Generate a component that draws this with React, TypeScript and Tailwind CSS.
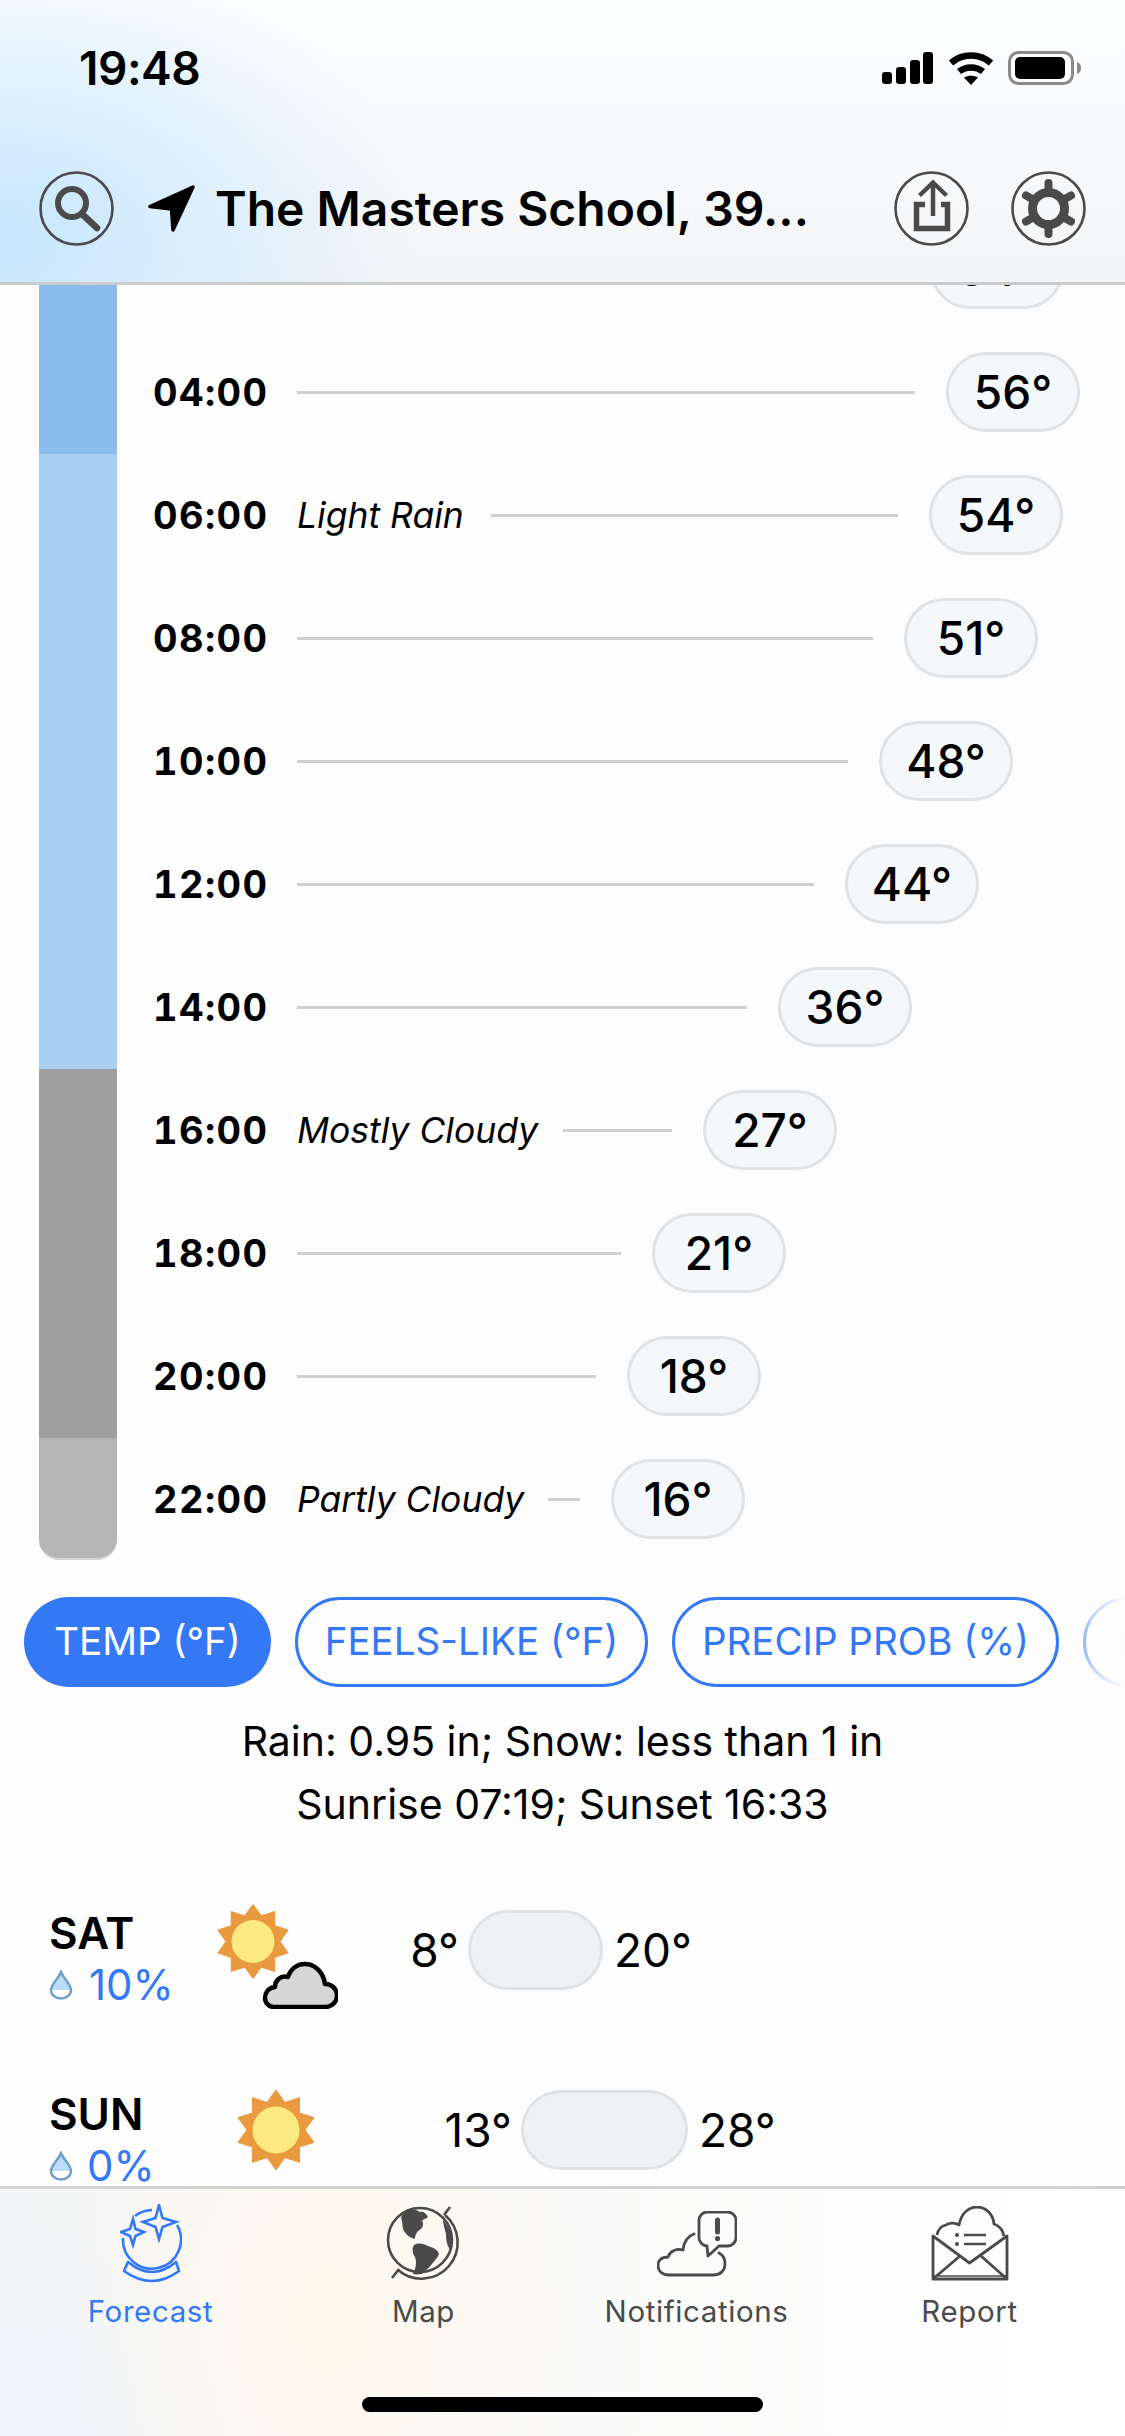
import React from "react";

const sunPoints = (c: number, R: number, r: number) => {
  const pts: string[] = [];
  for (let i = 0; i < 20; i++) {
    const a = (-90 + i * 18) * (Math.PI / 180);
    const rad = i % 2 === 0 ? R : r;
    pts.push(`${(c + rad * Math.cos(a)).toFixed(2)},${(c + rad * Math.sin(a)).toFixed(2)}`);
  }
  return pts.join(" ");
};

const rows = [
  { t: "02:00", label: "", labelW: "", line: "w-[602px]", temp: "54°" },
  { t: "04:00", label: "", labelW: "", line: "w-[618px]", temp: "56°" },
  { t: "06:00", label: "Light Rain", labelW: "w-[194px]", line: "w-[407px]", temp: "54°" },
  { t: "08:00", label: "", labelW: "", line: "w-[576px]", temp: "51°" },
  { t: "10:00", label: "", labelW: "", line: "w-[551px]", temp: "48°" },
  { t: "12:00", label: "", labelW: "", line: "w-[517px]", temp: "44°" },
  { t: "14:00", label: "", labelW: "", line: "w-[450px]", temp: "36°" },
  { t: "16:00", label: "Mostly Cloudy", labelW: "w-[266px]", line: "w-[109px]", temp: "27°" },
  { t: "18:00", label: "", labelW: "", line: "w-[324px]", temp: "21°" },
  { t: "20:00", label: "", labelW: "", line: "w-[299px]", temp: "18°" },
  { t: "22:00", label: "Partly Cloudy", labelW: "w-[251px]", line: "w-[32px]", temp: "16°" },
];

function Drop() {
  return (
    <svg width="24" height="30" viewBox="0 0 24 30" className="shrink-0">
      <path d="M12 2 C10 8 2 14 2 20 A10 8.5 0 0 0 22 20 C22 14 14 8 12 2 Z" fill="#fff" />
      <path d="M12 2 C10 8 2 14 2 20 L22 20 C22 14 14 8 12 2 Z" fill="#bcdcfa" />
      <path d="M12 2 C10 8 2 14 2 20 A10 8.5 0 0 0 22 20 C22 14 14 8 12 2 Z" fill="none" stroke="#6f9fc8" strokeWidth="2.4" />
    </svg>
  );
}

function Sun({ size }: { size: number }) {
  return (
    <svg width={size} height={size} viewBox="0 0 80 80" className="shrink-0">
      <polygon points={sunPoints(40, 40, 29)} fill="#ea9a3e" stroke="#ea9a3e" strokeWidth="1" strokeLinejoin="round" />
      <circle cx="40" cy="40" r="23.5" fill="#fce97f" />
    </svg>
  );
}

function SunCloud() {
  return (
    <svg width="121" height="105" viewBox="0 0 121 105" className="shrink-0">
      <polygon points={sunPoints(36, 37, 27)} fill="#ea9a3e" stroke="#ea9a3e" strokeWidth="1" strokeLinejoin="round" transform="translate(0 1.5)" />
      <circle cx="36" cy="37.5" r="21.5" fill="#fce97f" />
      <g transform="translate(46 58)">
        <path d="M11 45 H63 A11.5 11.5 0 0 0 62 22 C60 8 50 2 42 2 C33 2 27 8 25 15 C17 13 12 19 12 25 C5 26 2 31 2 36 C2 41 6 45 11 45 Z" fill="#d6d6d6" stroke="#000" strokeWidth="4.5" strokeLinejoin="round" />
      </g>
    </svg>
  );
}

function RoundBtn({ children }: { children: React.ReactNode }) {
  return (
    <svg width="75" height="75" viewBox="0 0 75 75" className="shrink-0" fill="none" stroke="#4a4a4a">
      <circle cx="37.5" cy="37.5" r="36" strokeWidth="2.6" />
      {children}
    </svg>
  );
}

function Pill({ children, cls }: { children: React.ReactNode; cls: string }) {
  return (
    <div className={`h-[80px] w-[134px] shrink-0 rounded-[40px] border-[3px] border-[#dfe3e6] bg-[#f5f8fb] flex items-center justify-center pt-[2px] text-[46px] font-medium text-black ${cls}`}>
      {children}
    </div>
  );
}

function Tab({ label, active, children }: { label: string; active?: boolean; children: React.ReactNode }) {
  return (
    <div className={`flex flex-col items-center h-[150px] ${active ? "text-[#3478f6]" : "text-[#4a4a4a]"}`}>
      <div className="h-[97px] flex items-center justify-center">{children}</div>
      <span className="-mt-[3px] text-[29.5px] leading-[44px] tracking-[0.6px]">{label}</span>
    </div>
  );
}

export default function App() {
  return (
    <div className="w-[1125px] h-[2436px] flex flex-col overflow-hidden bg-[#fdfdfd] font-[family-name:Inter,sans-serif] text-black">
      {/* Header */}
      <header className="h-[285px] shrink-0 border-b-[3px] border-[#c9cbcd] bg-[radial-gradient(ellipse_420px_300px_at_0px_240px,#c5e6ff_0%,rgba(197,230,255,0.55)_45%,rgba(197,230,255,0)_100%),linear-gradient(180deg,#fdfeff_0%,#f4f5f6_100%)]">
        <div className="h-[136px] flex items-center justify-between pl-[79px] pr-[43px]">
          <span className="text-[46px] font-semibold tracking-[-0.5px]">19:48</span>
          <div className="flex items-center gap-[15px]">
            <svg width="51" height="32" viewBox="0 0 51 32" fill="#000">
              <rect x="0" y="20" width="10" height="12" rx="3" />
              <rect x="14" y="15" width="10" height="17" rx="3" />
              <rect x="28" y="8" width="10" height="24" rx="3" />
              <rect x="41" y="0" width="10" height="32" rx="3" />
            </svg>
            <svg width="46" height="33" viewBox="0 0 46 33" fill="none" stroke="#000" strokeWidth="6.5">
              <path d="M3 11 C14 1 32 1 43 11" />
              <path d="M11 19.5 C18 14 28 14 35 19.5" />
              <path d="M23 33 L16 25.5 C20 23 26 23 30 25.5 Z" fill="#000" stroke="none" />
            </svg>
            <svg width="74" height="34" viewBox="0 0 74 34" className="-ml-[1px]">
              <rect x="1.5" y="1.5" width="63" height="31" rx="9" fill="none" stroke="#8a8a8a" strokeWidth="3" />
              <rect x="7" y="6" width="50" height="22" rx="5" fill="#000" />
              <path d="M69 11 C72 12 73 14 73 17 C73 20 72 22 69 23 Z" fill="#8a8a8a" />
            </svg>
          </div>
        </div>
        <div className="mt-[35px] h-[75px] flex items-center pl-[39px] pr-[39px]">
          <RoundBtn>
            <circle cx="33" cy="32" r="14" strokeWidth="6" />
            <path d="M43 43 L58 57" strokeWidth="6.5" strokeLinecap="round" />
          </RoundBtn>
          <svg width="47" height="47" viewBox="0 0 47 47" className="ml-[34px] shrink-0">
            <path d="M45 2 L2 21.5 L23.5 24 L25 45 Z" fill="#000" stroke="#000" strokeWidth="3.5" strokeLinejoin="round" />
          </svg>
          <span className="ml-[20px] text-[48px] font-semibold whitespace-nowrap">The Masters School, 39...</span>
          <div className="ml-auto flex items-center gap-[42px]">
            <RoundBtn>
              <path d="M39 12 V45" strokeWidth="4.5" />
              <path d="M25.5 24.5 L39 11.5 L52.5 24.5" strokeWidth="4.5" />
              <path d="M31 33.5 H22.5 V57.5 H53.5 V33.5 H47" strokeWidth="5.5" />
            </RoundBtn>
            <RoundBtn>
              <circle cx="37.5" cy="37.5" r="16" strokeWidth="9" />
              <path d="M37.5 12 V20 M37.5 55 V63 M15 24.5 L22 28.5 M53 46.5 L60 50.5 M60 24.5 L53 28.5 M22 46.5 L15 50.5" strokeWidth="8" strokeLinecap="round" />
            </RoundBtn>
          </div>
        </div>
      </header>

      {/* Scrolling content */}
      <main className="flex-1 min-h-0 overflow-hidden">
        <div className="flex h-[1275px]">
          <div className="ml-[39px] w-[78px] h-[1275px] shrink-0 flex flex-col overflow-hidden rounded-b-[20px] border-b-[2px] border-[#d5d5d5]">
            <div className="h-[169px] bg-[#8abcec]" />
            <div className="h-[615px] bg-[#a7d0f3]" />
            <div className="h-[369px] bg-[#9f9f9f]" />
            <div className="flex-1 bg-[#b5b5b5]" />
          </div>
          <div className="-mt-[78px] pl-[36px] flex flex-col">
            {rows.map((r) => (
              <div key={r.t} className="h-[123px] flex items-center">
                <span className="w-[144px] shrink-0 mt-[2px] text-[38px] font-bold tracking-[1.4px] tabular-nums">{r.t}</span>
                {r.label && (
                  <span className={`${r.labelW} shrink-0 mt-[2px] text-[35.5px] italic whitespace-nowrap`}>{r.label}</span>
                )}
                <div className={`h-[3px] mt-[2px] bg-[#cfcfcf] ${r.line}`} />
                <Pill cls="ml-[31px]">{r.temp}</Pill>
              </div>
            ))}
          </div>
        </div>

        {/* Chips */}
        <div className="relative mt-[37px] flex gap-[24px] pl-[24px] overflow-hidden h-[90px]">
          <div className="h-[90px] w-[247px] shrink-0 rounded-[45px] bg-[#3478f6] text-white text-[38.5px] flex items-center justify-center">TEMP (°F)</div>
          <div className="h-[90px] w-[353px] shrink-0 rounded-[45px] border-[3px] border-[#3478f6] text-[#3478f6] text-[38.5px] flex items-center justify-center">FEELS-LIKE (°F)</div>
          <div className="h-[90px] w-[387px] shrink-0 rounded-[45px] border-[3px] border-[#3478f6] text-[#3478f6] text-[38.5px] flex items-center justify-center">PRECIP PROB (%)</div>
          <div className="h-[90px] w-[353px] shrink-0 rounded-[45px] border-[3px] border-[#3478f6] text-[#3478f6] text-[38.5px] flex items-center pl-[33px]">RAIN (in)</div>
          <div className="absolute right-0 top-0 h-[90px] w-[65px] bg-gradient-to-r from-[#fdfdfd00] via-[#fdfdfdb0] to-[#fdfdfd]" />
        </div>

        {/* Summary */}
        <div className="mt-[23px] text-center text-[41px] leading-[63px]">
          <p>Rain: 0.95 in; Snow: less than 1 in</p>
          <p>Sunrise 07:19; Sunset 16:33</p>
        </div>

        {/* Days */}
        <div className="mt-[68px] flex h-[181px] items-start pl-[49px]">
          <div className="w-[168px] shrink-0">
            <div className="pt-[3px] text-[44px] leading-[53px] font-semibold">SAT</div>
            <div className="flex items-center gap-[16px] text-[42px] leading-[50px] text-[#3478f6]"><Drop />10%</div>
          </div>
          <SunCloud />
          <div className="mt-[6px] flex items-center text-[46px]">
            <span className="w-[121px] text-right">8°</span>
            <div className="ml-[9px] h-[80px] w-[135px] rounded-[40px] border-[3px] border-[#dfe3e6] bg-[#eff2f4]" />
            <span className="ml-[11px]">20°</span>
          </div>
        </div>
        <div className="flex h-[181px] items-start pl-[49px]">
          <div className="w-[187px] shrink-0">
            <div className="pt-[3px] text-[44px] leading-[53px] font-semibold">SUN</div>
            <div className="flex items-center gap-[14px] text-[42px] leading-[50px] text-[#3478f6]"><Drop />0%</div>
          </div>
          <div className="mt-[5px]"><Sun size={80} /></div>
          <div className="mt-[5px] flex items-center text-[46px]">
            <span className="w-[196px] text-right">13°</span>
            <div className="ml-[9px] h-[80px] w-[167px] rounded-[40px] border-[3px] border-[#dfe3e6] bg-[#eff2f4]" />
            <span className="ml-[11px]">28°</span>
          </div>
        </div>
      </main>

      {/* Tab bar */}
      <footer className="h-[250px] shrink-0 border-t-[3px] border-[#d2d2d2] relative bg-[radial-gradient(ellipse_260px_360px_at_330px_130px,#fff8ec_0%,rgba(255,248,236,0)_100%),radial-gradient(ellipse_260px_240px_at_0px_250px,#eff4fa_0%,rgba(239,244,250,0)_100%),linear-gradient(90deg,#f4f5f6_0%,#fbfbfa_60%,#ffffff_100%)]">
        <div className="pl-[14px] pt-[6px] grid grid-cols-[repeat(4,273px)]">
          <Tab label="Forecast" active>
            <svg width="62" height="80" viewBox="0 0 62 80" fill="none" stroke="#3478f6" strokeWidth="2.6" strokeLinejoin="miter">
              <path d="M57 21 A29 29 0 1 1 3 34" />
              <path d="M15 12 A29 29 0 0 1 32 6" />
              <path d="M39 1 L42.5 14 L56 18 L42.5 23 L39 35 L35.5 23 L23 18 L35.5 14 Z" />
              <path d="M13 15 L15.5 25 L24 28 L15.5 32 L13 41 L10 32 L1 28 L10 25 Z" />
              <path d="M8 58 Q32 78 56 58 L59 67 Q32 87 4 67 Z" strokeLinejoin="round" />
            </svg>
          </Tab>
          <Tab label="Map">
            <svg width="76" height="80" viewBox="0 0 76 80" fill="none" stroke="#4a4a4a" strokeWidth="2.6">
              <circle cx="34" cy="36" r="32" />
              <path d="M59 11 A36 36 0 0 1 12 66" />
              <path d="M58 11 L64 3 M13 65 L6 74" />
              <path d="M22 6 C28 5 31 6 34 8 C37 7 40 9 42 13 C40 15 37 15 36 17 C39 21 35 26 32 27 C30 30 29 31 29 35 C25 34 21 32 18 27 C16 24 17 18 15 14 C16 10 19 7 22 6 Z" fill="#4a4a4a" stroke="none" />
              <path d="M28 41 C33 38 38 40 42 42 C48 44 52 46 53 50 C51 55 48 57 46 60 C43 64 40 66 36 70 C33 70 30 71 27 70 C30 64 31 58 29 53 C26 49 26 44 28 41 Z" fill="#4a4a4a" stroke="none" />
              <path d="M57 16 C60 19 63 24 65 30 C66 36 66 40 64 45 C61 42 60 36 60 30 C59 25 57 21 57 16 Z" fill="#4a4a4a" stroke="none" />
            </svg>
          </Tab>
          <Tab label="Notifications">
            <svg width="80" height="66" viewBox="0 0 80 66" fill="none" stroke="#4a4a4a" strokeWidth="2.8" strokeLinejoin="round" strokeLinecap="round">
              <path d="M37 23 C31 25 27 30 26 39 C20 37 13 40 11 46 C4 46 1 50 1 54 C1 60 5 64 12 64 H56 C63 64 68 60 68 53 C68 48 66 44 62 42" />
              <path d="M50 1 H71 C75 1 79 5 79 9 V27 C79 31 75 35 71 35 H62 L51 45 L50 35 C46 35 42 31 42 27 V9 C42 5 46 1 50 1 Z" />
              <path d="M60.5 9 V21" strokeWidth="5" />
              <circle cx="60.5" cy="27.5" r="2.6" fill="#4a4a4a" stroke="none" />
            </svg>
          </Tab>
          <Tab label="Report">
            <svg width="78" height="76" viewBox="0 0 78 76" fill="none" stroke="#4a4a4a" strokeWidth="2.8" strokeLinejoin="round">
              <path d="M6 29 C7 24 10 20 15 19 C17 17 24 16 28 19 C30 8 37 1 46 1 C55 1 62 8 63 18 C69 20 72 25 73 30" />
              <path d="M2 30 V73 H76 V30 L38.5 57 Z" />
              <path d="M2 73 L29 50 M76 73 L50 50" />
              <path d="M2 70 H76" strokeWidth="1.6" />
              <path d="M33 29 H55 M33 38 H55" strokeWidth="2.6" />
              <circle cx="26" cy="29" r="2" fill="#4a4a4a" stroke="none" />
              <circle cx="26" cy="38" r="2" fill="#4a4a4a" stroke="none" />
            </svg>
          </Tab>
        </div>
        <div className="absolute left-[362px] top-[208px] h-[15px] w-[401px] rounded-full bg-black" />
      </footer>
    </div>
  );
}
